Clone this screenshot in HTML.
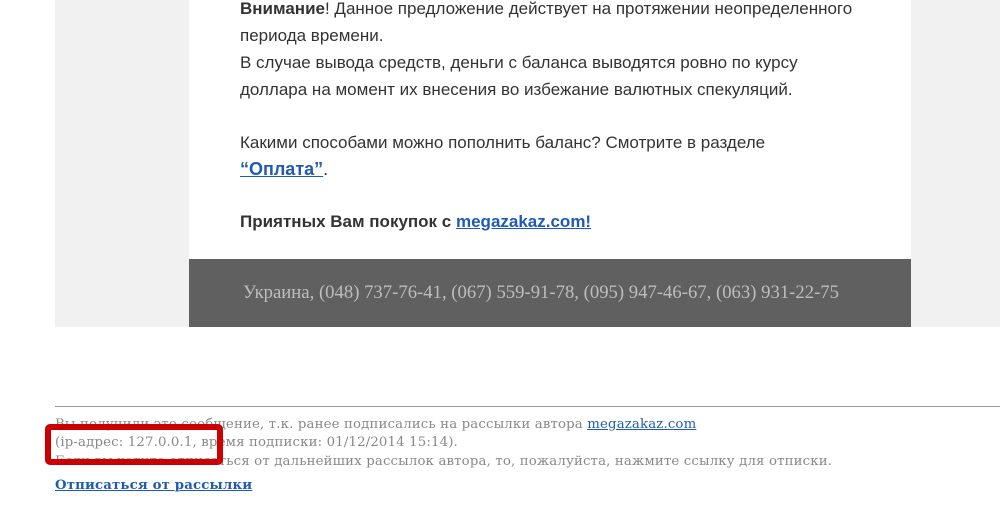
<!DOCTYPE html>
<html><head><meta charset="utf-8"><style>
body{margin:0;width:1000px;height:512px;background:#fff;position:relative;overflow:hidden;font-family:"Liberation Sans",sans-serif}
.outer{position:absolute;left:55px;top:0;width:945px;height:327px;background:#f1f1f1}
.box{position:absolute;left:189px;top:0;width:722px;height:259px;background:#fff}
.t{position:absolute;left:240px;font-size:17px;color:#333;white-space:nowrap;line-height:20px}
.foot{position:absolute;left:189px;top:259px;width:704px;padding-right:18px;height:68px;background:#606060;color:#bdbdbd;font-family:"Liberation Serif",serif;font-size:18.7px;text-align:center;line-height:68px}
a{color:#1f5bb5}
.hr{position:absolute;left:55px;top:406px;width:945px;height:1px;background:#999}
.s{position:absolute;left:55px;font-family:"DejaVu Serif",serif;font-size:13.3px;letter-spacing:0.15px;color:#888;white-space:nowrap;line-height:16px}
.red{position:absolute;left:45px;top:424px;width:166px;height:29px;border:6px solid #c00;border-radius:5px}
</style></head><body>
<div class="outer"></div>
<div class="box"></div>
<div class="t" style="top:-1px"><b>Внимание</b>! Данное предложение действует на протяжении неопределенного</div>
<div class="t" style="top:26px">периода времени.</div>
<div class="t" style="top:53px">В случае вывода средств, деньги с баланса выводятся ровно по курсу</div>
<div class="t" style="top:80px">доллара на момент их внесения во избежание валютных спекуляций.</div>
<div class="t" style="top:133px">Какими способами можно пополнить баланс? Смотрите в разделе</div>
<div class="t" style="top:159px;font-size:18px"><a href="#"><b>“Оплата”</b></a>.</div>
<div class="t" style="top:212px"><b>Приятных Вам покупок с <a href="#">megazakaz.com!</a></b></div>
<div class="foot">Украина, (048) 737-76-41, (067) 559-91-78, (095) 947-46-67, (063) 931-22-75</div>
<div class="hr"></div>
<div class="s" style="top:417px">Вы получили это сообщение, т.к. ранее подписались на рассылки автора <a href="#">megazakaz.com</a></div>
<div class="s" style="top:435px">(ip-адрес: 127.0.0.1, время подписки: 01/12/2014 15:14).</div>
<div class="s" style="top:454px">Если вы хотите отписаться от дальнейших рассылок автора, то, пожалуйста, нажмите ссылку для отписки.</div>
<div class="s" style="top:478px"><a href="#"><b>Отписаться от рассылки</b></a></div>
<div class="red"></div>
</body></html>
